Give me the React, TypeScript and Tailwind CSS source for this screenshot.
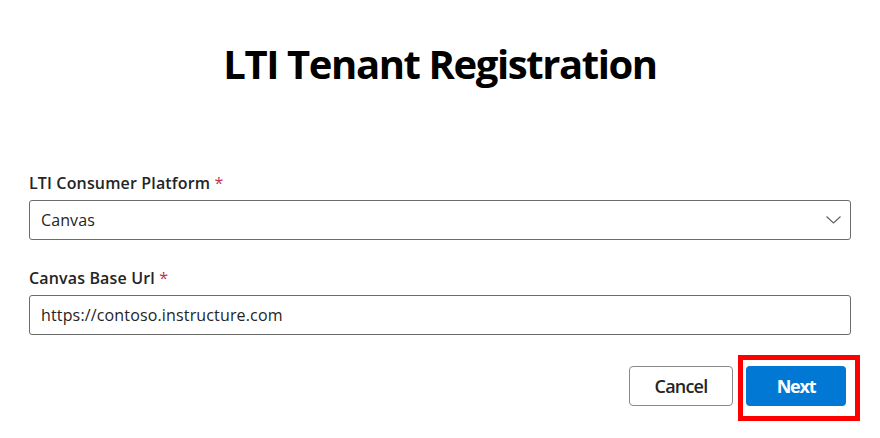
import React from 'react';

const font = { fontFamily: '"Open Sans", "Noto Sans", Arial, sans-serif' };

const Label: React.FC<{ text: string }> = ({ text }) => (
  <label className="block text-[16px] leading-[22px] font-semibold text-[#242424] tracking-[0.15px]">
    {text} <span className="text-[#c4314b] font-normal">*</span>
  </label>
);

const App: React.FC = () => {
  return (
    <div className="min-h-screen w-full bg-white px-[29px]" style={font}>
      {/* TITLE */}
      <h1 className="pt-[40px] text-center text-[40px] leading-[48px] font-bold text-black tracking-[-1.4px]">
        LTI Tenant Registration
      </h1>

      {/* FORM */}
      <form className="mt-[84px]">
        <Label text="LTI Consumer Platform" />
        <div className="mt-[6px] h-[40px] border border-[#6b6b6b] rounded-[3px] flex items-center justify-between pl-[11px] pr-[9px]">
          <span className="text-[16px] text-[#242424] tracking-[0.1px]">Canvas</span>
          <svg width="15" height="8" viewBox="0 0 15 8" fill="none">
            <path d="M0.5 0.5 L7.5 7 L14.5 0.5" stroke="#616161" strokeWidth="1.1" />
          </svg>
        </div>

        <div className="mt-[27px]">
          <Label text="Canvas Base Url" />
        </div>
        <div className="mt-[6px] h-[40px] border border-[#6b6b6b] rounded-[3px] flex items-center pl-[11px]">
          <span className="text-[16px] text-[#242424] tracking-[0.15px]">https://contoso.instructure.com</span>
        </div>

        {/* ACTIONS */}
        <div className="mt-[31px] flex justify-end gap-[13px] pr-[5px]">
          <button
            type="button"
            className="w-[104px] h-[40px] border border-[#8a8a8a] rounded-[4px] bg-white text-[18px] font-semibold text-[#242424] tracking-[-0.8px]"
          >
            Cancel
          </button>
          <div className="relative">
            <button
              type="button"
              className="w-[100px] h-[40px] rounded-[4px] bg-[#0078d4] text-[18px] font-bold text-white tracking-[-1.2px]"
            >
              Next
            </button>
            <div className="absolute left-[-8px] top-[-11px] w-[122px] h-[66px] border-[5px] border-[#ff0000] pointer-events-none" />
          </div>
        </div>
      </form>
    </div>
  );
};

export default App;
